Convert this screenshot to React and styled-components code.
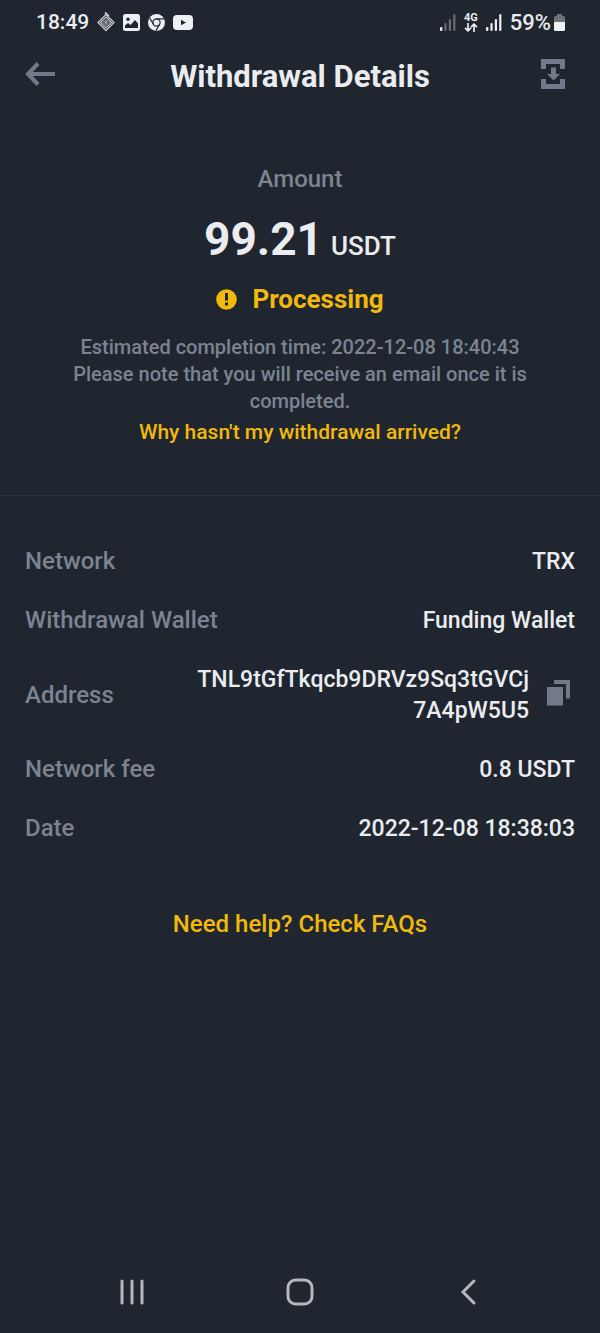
import React from 'react';
import styled, { createGlobalStyle } from 'styled-components';

const details = [
  { label: 'Network', value: 'TRX' },
  { label: 'Withdrawal Wallet', value: 'Funding Wallet' },
  { label: 'Address', value: 'TNL9tGfTkqcb9DRVz9Sq3tGVCj7A4pW5U5', copy: true },
  { label: 'Network fee', value: '0.8 USDT' },
  { label: 'Date', value: '2022-12-08 18:38:03' },
];

const DiamondIcon = () => (
  <svg width="18" height="20" viewBox="0 0 18 20" fill="none" stroke="#c4c7cc">
    <path d="M9 2.5L17 10.5L9 18.5L1 10.5L8.5 3V0.5L12 4" strokeWidth="1.3" />
    <path d="M9 5L14.5 10.5L9 16L3.5 10.5Z" strokeWidth="1.2" />
    <path d="M9 7.5L12 10.5L9 13.5L6 10.5Z" strokeWidth="1" />
    <circle cx="9" cy="10.5" r="1.2" fill="#c4c7cc" stroke="none" />
  </svg>
);

const PictureIcon = () => (
  <svg width="17" height="17" viewBox="0 0 17 17">
    <rect width="17" height="17" rx="2.5" fill="#eceef1" />
    <circle cx="5" cy="5.2" r="1.7" fill="#202630" />
    <path d="M2 14V11.5L5 9L7.5 11L12 6L15 9.5V14Z" fill="#202630" />
  </svg>
);

const ChromeIcon = () => (
  <svg width="17" height="17" viewBox="0 0 17 17" fill="none" stroke="#202630">
    <circle cx="8.5" cy="8.5" r="8.5" fill="#eceef1" stroke="none" />
    <circle cx="8.5" cy="8.5" r="3.6" strokeWidth="1.2" />
    <path d="M8.5 4.9H16M5.4 10.3L1.6 3.9M11.6 10.3L8 16.6" strokeWidth="1.2" />
  </svg>
);

const VideoIcon = () => (
  <svg width="20" height="15" viewBox="0 0 20 15">
    <rect width="20" height="15" rx="4" fill="#eceef1" />
    <path d="M8 4.8L13 7.5L8 10.2Z" fill="#202630" />
  </svg>
);

const SignalIcon = ({ faded }) => (
  <svg width="16" height="17" viewBox="0 0 16 17" fill="#eceef1">
    <rect x="0" y="13" width="2.4" height="4" rx="1" />
    <g opacity={faded ? 0.35 : 1}>
      <rect x="4.4" y="9" width="2.2" height="8" rx="1" />
      <rect x="8.8" y="5" width="2.2" height="12" rx="1" />
      <rect x="13.2" y="0" width="2.2" height="17" rx="1" />
    </g>
  </svg>
);

const DataArrowsIcon = () => (
  <svg width="14" height="9" viewBox="0 0 14 9" fill="none" stroke="#eceef1" strokeWidth="1.7">
    <path d="M4 0V7.5M1 4.8L4 7.8L7 4.8M10 9V1.5M7 4.2L10 1.2L13 4.2" />
  </svg>
);

const BatteryIcon = () => (
  <svg width="11" height="17" viewBox="0 0 11 17">
    <path d="M3 0H8V2H9.5Q11 2 11 3.5V8H0V3.5Q0 2 1.5 2H3Z" fill="#6f7379" />
    <path d="M0 8H11V15.5Q11 17 9.5 17H1.5Q0 17 0 15.5Z" fill="#f1f2f4" />
  </svg>
);

const BackArrowIcon = () => (
  <svg width="30" height="24" viewBox="0 0 30 24" fill="none" stroke="#717a8b" strokeWidth="4">
    <path d="M30 12H4M13 1.5L3 12L13 22.5" />
  </svg>
);

const SaveIcon = () => (
  <svg width="24" height="30" viewBox="0 0 24 30" fill="#717a8b">
    <path d="M0 0H24V10H19V5H5V10H0ZM0 20H5V25H19V20H24V30H0Z" />
    <path d="M10 8.5H15V15H19L12.5 21.5L6 15H10Z" />
  </svg>
);

const AlertIcon = () => (
  <svg width="21" height="21" viewBox="0 0 21 21">
    <circle cx="10.5" cy="10.5" r="10.3" fill="#f0b90b" />
    <path d="M9 4H12V11.5H9ZM9 13.5H12V16.5H9Z" fill="#202630" />
  </svg>
);

const CopyIcon = () => (
  <svg width="24" height="26" viewBox="0 0 24 26" fill="#717a8b">
    <path d="M0 7H16V25.5H0Z" />
    <path d="M7 0H23V18.5H19V4H7Z" />
  </svg>
);

const RecentsIcon = () => (
  <svg width="26" height="28" viewBox="0 0 26 28" stroke="#b4b7bd" strokeWidth="3" strokeLinecap="round">
    <path d="M3 3V25M13 3V25M23 3V25" />
  </svg>
);

const HomeIcon = () => (
  <svg width="28" height="28" viewBox="0 0 28 28" fill="none" stroke="#b4b7bd" strokeWidth="3">
    <rect x="2" y="2" width="24" height="24" rx="7.5" />
  </svg>
);

const NavBackIcon = () => (
  <svg width="18" height="28" viewBox="0 0 18 28" fill="none" stroke="#b4b7bd" strokeWidth="3" strokeLinecap="round">
    <path d="M15 3L4 14L15 25" />
  </svg>
);

const App = () => {
  return (
    <Page>
      <GlobalStyle />
      <StatusBar>
        <StatusGroup>
          <Clock>18:49</Clock>
          <DiamondIcon />
          <PictureIcon />
          <ChromeIcon />
          <VideoIcon />
        </StatusGroup>
        <StatusGroup>
          <SignalIcon faded />
          <MobileData>
            <span>4G</span>
            <DataArrowsIcon />
          </MobileData>
          <SignalIcon />
          <Battery>
            59%
            <BatteryIcon />
          </Battery>
        </StatusGroup>
      </StatusBar>

      <Header>
        <IconButton aria-label="Back"><BackArrowIcon /></IconButton>
        <Title>Withdrawal Details</Title>
        <HeaderAction>
          <IconButton aria-label="Save"><SaveIcon /></IconButton>
        </HeaderAction>
      </Header>

      <Summary>
        <AmountLabel>Amount</AmountLabel>
        <Amount>99.21<Currency>USDT</Currency></Amount>
        <Status><AlertIcon />Processing</Status>
        <Note>
          Estimated completion time: 2022-12-08 18:40:43<br />
          Please note that you will receive an email once it is completed.
        </Note>
        <HelpLink href="#arrival">Why hasn't my withdrawal arrived?</HelpLink>
      </Summary>

      <DetailList>
        {details.map((item) => (
          <DetailRow key={item.label}>
            <DetailLabel>{item.label}</DetailLabel>
            <DetailValue>
              <ValueText $narrow={item.copy}>{item.value}</ValueText>
              {item.copy && <CopyButton aria-label="Copy address"><CopyIcon /></CopyButton>}
            </DetailValue>
          </DetailRow>
        ))}
      </DetailList>

      <FaqLink href="#faq">Need help? Check FAQs</FaqLink>

      <SystemNav>
        <NavButton aria-label="Recent apps"><RecentsIcon /></NavButton>
        <NavButton aria-label="Home"><HomeIcon /></NavButton>
        <NavButton aria-label="Go back"><NavBackIcon /></NavButton>
      </SystemNav>
    </Page>
  );
};

const GlobalStyle = createGlobalStyle`
  * {
    box-sizing: border-box;
  }
  body {
    margin: 0;
    background: #202630;
    font-family: Roboto, 'Liberation Sans', sans-serif;
  }
  svg {
    display: block;
    flex-shrink: 0;
  }
`;

const Page = styled.div`
  display: flex;
  flex-direction: column;
  min-height: 100vh;
  color: #eaecef;
`;

const StatusBar = styled.div`
  display: flex;
  justify-content: space-between;
  align-items: center;
  height: 44px;
  padding: 0 35px 0 36px;
`;

const StatusGroup = styled.div`
  display: flex;
  align-items: center;
  gap: 8px;
`;

const Clock = styled.span`
  font-size: 21px;
  font-weight: 500;
`;

const MobileData = styled.div`
  display: flex;
  flex-direction: column;
  align-items: center;
  font-size: 11px;
  font-weight: 700;
  line-height: 10px;
`;

const Battery = styled.div`
  display: flex;
  align-items: center;
  gap: 3px;
  font-size: 22px;
  font-weight: 500;
`;

const Header = styled.header`
  display: grid;
  grid-template-columns: 1fr auto 1fr;
  align-items: center;
  height: 60px;
  padding: 0 25px;
`;

const IconButton = styled.button`
  display: flex;
  justify-content: center;
  justify-self: start;
  padding: 0;
  border: none;
  background: none;
  cursor: pointer;
`;

const HeaderAction = styled.div`
  display: flex;
  justify-content: flex-end;
  padding-right: 10px;
`;

const Title = styled.h1`
  margin: 0;
  padding-top: 4px;
  font-size: 31px;
  font-weight: 700;
`;

const Summary = styled.section`
  display: flex;
  flex-direction: column;
  align-items: center;
  padding: 59px 48px 49px;
  border-bottom: 1px solid #2f3641;
  text-align: center;
`;

const AmountLabel = styled.div`
  color: #7c8492;
  font-size: 24px;
  font-weight: 500;
  line-height: 32px;
`;

const Amount = styled.div`
  display: flex;
  align-items: baseline;
  gap: 8px;
  margin-top: 16px;
  font-size: 46px;
  font-weight: 700;
  line-height: 56px;
`;

const Currency = styled.span`
  font-size: 26px;
  font-weight: 500;
`;

const Status = styled.div`
  display: flex;
  align-items: center;
  gap: 15px;
  margin-top: 9px;
  color: #f0b90b;
  font-size: 26px;
  font-weight: 700;
  line-height: 32px;
`;

const Note = styled.p`
  margin: 19px 0 0;
  color: #7c8492;
  font-size: 20px;
  font-weight: 500;
  line-height: 27px;
`;

const HelpLink = styled.a`
  margin-top: 3px;
  color: #f0b90b;
  font-size: 21px;
  font-weight: 500;
  line-height: 28px;
  text-decoration: none;
`;

const DetailList = styled.dl`
  display: flex;
  flex-direction: column;
  gap: 28px;
  margin: 0;
  padding: 50px 25px 0;
`;

const DetailRow = styled.div`
  display: flex;
  justify-content: space-between;
  align-items: center;
  font-weight: 500;
  line-height: 31px;
`;

const DetailLabel = styled.dt`
  color: #7c8492;
  font-size: 24px;
`;

const DetailValue = styled.dd`
  display: flex;
  align-items: center;
  gap: 18px;
  margin: 0;
  font-size: 23px;
`;

const ValueText = styled.span`
  max-width: ${({ $narrow }) => ($narrow ? '340px' : 'none')};
  text-align: right;
  overflow-wrap: anywhere;
`;

const CopyButton = styled(IconButton)`
  padding: 0 4px 4px 0;
`;

const FaqLink = styled.a`
  align-self: center;
  margin-top: 64px;
  color: #f0b90b;
  font-size: 24px;
  font-weight: 500;
  line-height: 32px;
  text-decoration: none;
`;

const SystemNav = styled.nav`
  display: flex;
  align-items: center;
  height: 82px;
  margin-top: auto;
  padding: 0 8%;
`;

const NavButton = styled(IconButton)`
  flex: 1;
`;

export default App;
